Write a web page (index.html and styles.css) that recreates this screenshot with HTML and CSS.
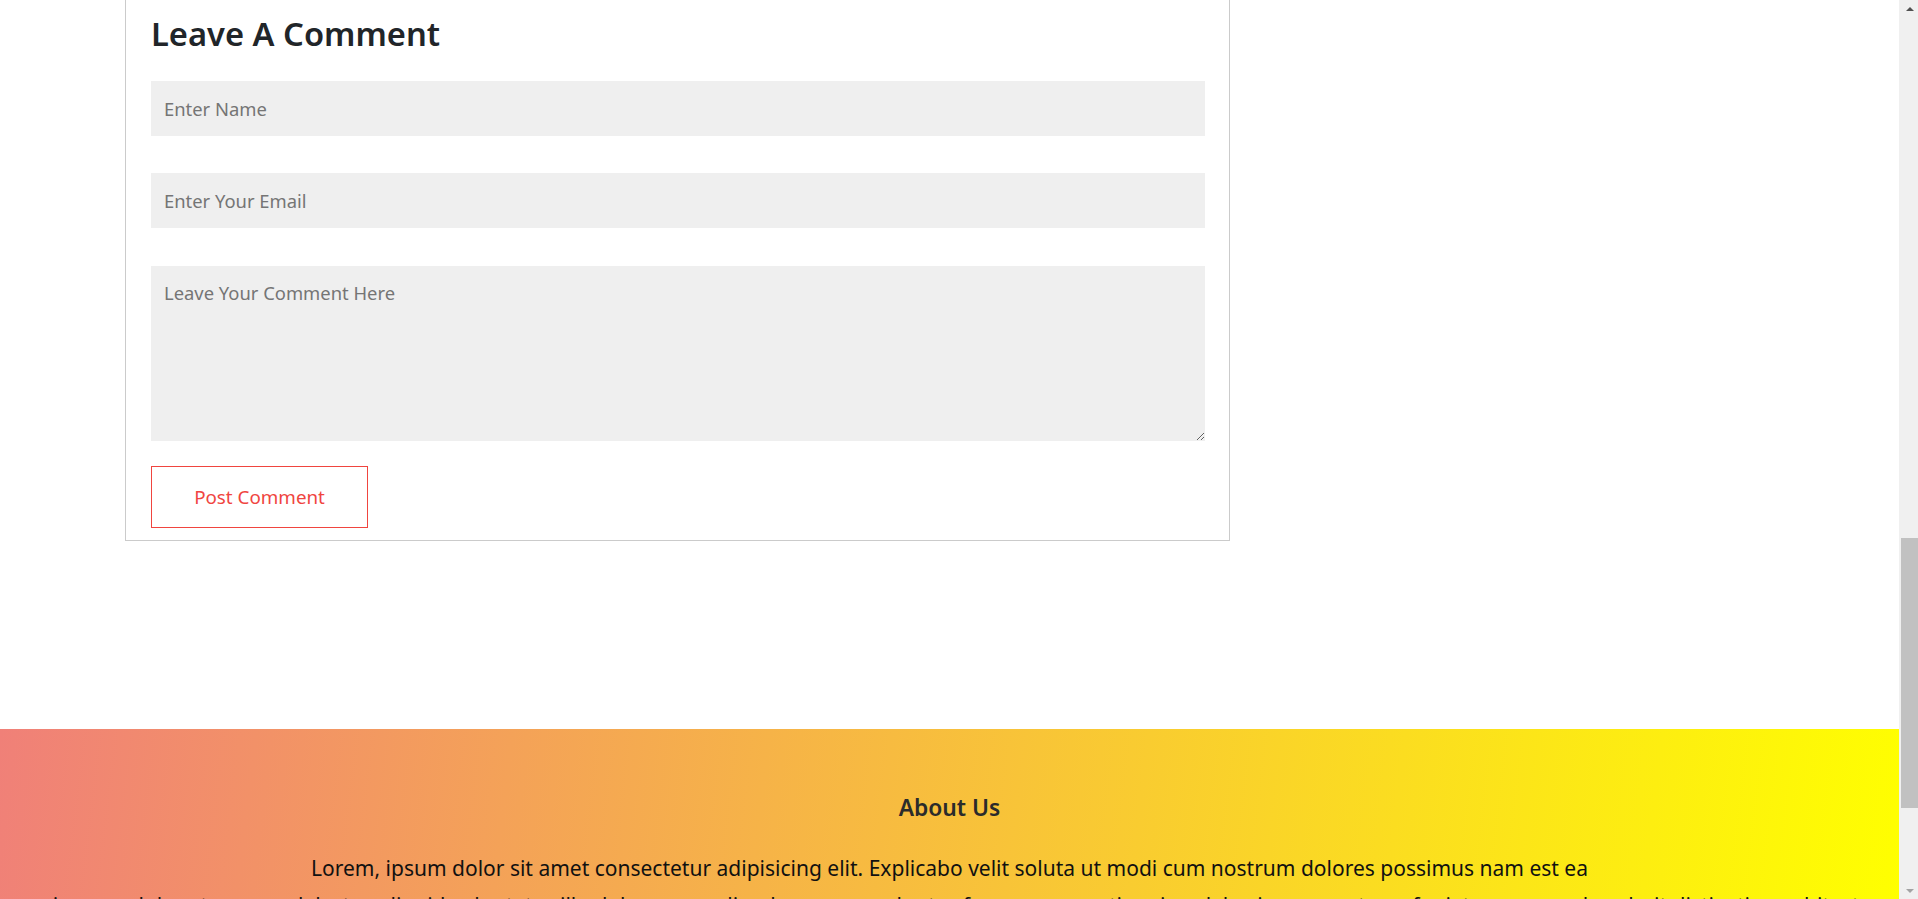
FILE: index.html
```html
<!DOCTYPE html>
<html lang="en">
<head>
<meta charset="utf-8">
<title>Leave A Comment</title>
<link rel="stylesheet" href="styles.css">
</head>
<body>
<div class="page">
  <div class="main">
    <section class="comment-wrap">
      <div class="card">
        <h2 class="card-title">Leave A Comment</h2>
        <form class="comment-form">
          <input class="field" type="text" placeholder="Enter Name">
          <input class="field" type="email" placeholder="Enter Your Email">
          <textarea class="field area" placeholder="Leave Your Comment Here"></textarea>
          <button class="btn-post" type="button">Post Comment</button>
        </form>
      </div>
    </section>
    <footer class="footer">
      <h3 class="footer-title">About Us</h3>
      <p class="footer-text">Lorem, ipsum dolor sit amet consectetur adipisicing elit. Explicabo velit soluta ut modi cum nostrum dolores possimus nam est ea<br>quisquam dolore tempora delectus aliquid voluptates illo dolores repudiandae, quam voluptas facere praesentium ipsa laboriosam nostrum fugiat quos reprehenderit distinctio, architecto officia deleniti eligendi blanditiis harum.</p>
    </footer>
  </div>
  <div class="scrollbar">
    <div class="sb-btn"><span class="arrow-up"></span></div>
    <div class="sb-gap-top"></div>
    <div class="sb-thumb"></div>
    <div class="sb-gap-bottom"></div>
    <div class="sb-btn sb-btn-down"><span class="arrow-down"></span></div>
  </div>
</div>
</body>
</html>
```
FILE: styles.css
```css
* { box-sizing: border-box; }
html, body { margin: 0; padding: 0; }
body {
  font-family: "Noto Sans", "Open Sans", sans-serif;
  color: #212529;
  background: #fff;
  overflow: hidden;
}
.page {
  display: flex;
  height: 899px;
  overflow: hidden;
}
.main {
  flex: 1;
  display: flex;
  flex-direction: column;
  min-width: 0;
  overflow: hidden;
}
.comment-wrap {
  padding-left: 125px;
  flex: none;
}
.card {
  width: 1105px;
  border: 1px solid #cbcbcb;
  border-top: none;
  padding: 14px 24px 12px 25px;
}
.card-title {
  margin: 0 0 28px 0;
  font-size: 32.7px;
  line-height: 39px;
  font-weight: 600;
  color: #212529;
}
.comment-form {
  display: flex;
  flex-direction: column;
}
.field {
  display: block;
  width: 100%;
  height: 55px;
  margin: 0 0 37px 0;
  border: none;
  background: #efefef;
  padding: 0 13px;
  font-family: inherit;
  font-size: 18.4px;
  color: #495057;
  outline: none;
}
.field::placeholder { color: #757575; }
.area {
  height: 175px;
  margin-top: 1px;
  margin-bottom: 25px;
  padding: 14px 13px;
  resize: vertical;
}
.btn-post {
  width: 217px;
  height: 62px;
  background: #fff;
  border: 1px solid #f0453f;
  color: #f0453f;
  font-family: inherit;
  font-size: 18.8px;
  padding: 0;
  cursor: pointer;
}
.footer {
  margin-top: 188px;
  flex: 1;
  min-height: 0;
  background: linear-gradient(97deg, #f08078, #ffff00);
  text-align: center;
  padding-top: 66px;
}
.footer-title {
  margin: 0;
  font-size: 22.8px;
  line-height: 26px;
  font-weight: 600;
  color: #2b2b2b;
}
.footer-text {
  margin: 28.5px 0 0 0;
  font-size: 21px;
  line-height: 37px;
  color: #111;
}
.scrollbar {
  width: 19px;
  flex: none;
  background: #f0f0f0;
  display: flex;
  flex-direction: column;
  padding-left: 2px;
}
.sb-btn {
  height: 17px;
  flex: none;
  display: flex;
  align-items: center;
  justify-content: center;
}
.arrow-up {
  width: 0; height: 0;
  border-left: 4px solid transparent;
  border-right: 4px solid transparent;
  border-bottom: 4px solid #505050;
}
.arrow-down {
  width: 0; height: 0;
  border-left: 4px solid transparent;
  border-right: 4px solid transparent;
  border-top: 4px solid #a3a3a3;
}
.sb-gap-top { height: 521px; flex: none; }
.sb-thumb { height: 270px; flex: none; background: #c1c1c1; }
.sb-gap-bottom { flex: 1; }
```
